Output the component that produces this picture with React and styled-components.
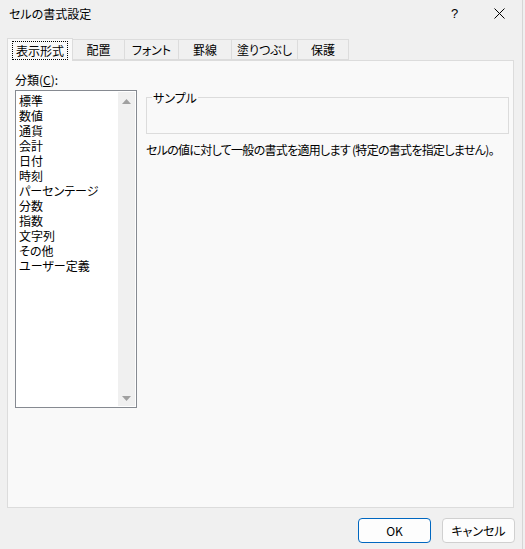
import React from 'react';
import styled, {createGlobalStyle} from 'styled-components';

const GlobalStyle = createGlobalStyle`
  html, body {
    margin: 0;
    padding: 0;
    background: #f0f0f0;
  }
  body {
    font-family: "Noto Sans CJK JP", "Noto Sans", sans-serif;
    font-size: 12px;
    font-feature-settings: "palt";
    color: #000;
  }
`;

const Window = styled.div`
  width: 523px;
  height: 549px;
  background: #f0f0f0;
  border-right: 1px solid #d6d6d6;
  display: flex;
  flex-direction: column;
  box-sizing: border-box;
`;

const TitleBar = styled.div`
  height: 27px;
  display: flex;
  align-items: center;
  padding-left: 9px;

  > span {
    flex: 1;
    line-height: 15px;
  }
`;

const TitleButton = styled.div`
  width: 45px;
  height: 27px;
  display: flex;
  align-items: center;
  justify-content: center;
  font-family: "Liberation Sans", sans-serif;
  font-size: 13px;
`;

const TabStrip = styled.div`
  display: flex;
  align-items: flex-end;
  margin-top: 10px;
  padding-left: 7px;
  height: 23px;
`;

const Tab = styled.div`
  width: ${(p) => p.w}px;
  height: ${(p) => (p.active ? 23 : 21)}px;
  box-sizing: border-box;
  border: 1px solid #dcdcdc;
  border-bottom: ${(p) => (p.active ? 'none' : '1px solid #dcdcdc')};
  border-left: ${(p) => (p.first || p.active ? '1px solid #dcdcdc' : 'none')};
  background: ${(p) => (p.active ? '#f9f9f9' : '#f0f0f0')};
  display: flex;
  align-items: center;
  justify-content: center;
  line-height: 15px;
  white-space: nowrap;
  position: relative;
  z-index: ${(p) => (p.active ? 1 : 0)};
  margin-bottom: ${(p) => (p.active ? '-1px' : '0')};

  > span {
    padding: 1px 3px;
    border: ${(p) => (p.active ? '1px dotted #000' : '1px solid transparent')};
  }
`;

const Panel = styled.div`
  margin: 0 8px 0 7px;
  height: 448px;
  box-sizing: border-box;
  border: 1px solid #dcdcdc;
  background: #f9f9f9;
  padding: 11px 7px 0 7px;
  display: flex;
  gap: 9px;
`;

const LeftColumn = styled.div`
  display: flex;
  flex-direction: column;
  gap: 3px;
`;

const Label = styled.div`
  line-height: 15px;
`;

const ListBox = styled.div`
  width: 122px;
  height: 318px;
  box-sizing: border-box;
  border: 1px solid #868a91;
  background: #fff;
  padding: 1px;
  display: flex;
`;

const ListItems = styled.div`
  flex: 1;
  padding-left: 2px;
  padding-top: 1px;

  > div {
    line-height: 15px;
    height: 15px;
    white-space: nowrap;
  }
`;

const ScrollBar = styled.div`
  width: 17px;
  background: #f0f0f0;
  display: flex;
  flex-direction: column;
  justify-content: space-between;
  align-items: center;
  padding: 7px 0 5px;
  box-sizing: border-box;
`;

const RightColumn = styled.div`
  display: flex;
  flex-direction: column;
  padding-top: 25px;
`;

const SampleBox = styled.div`
  position: relative;
  width: 363px;
  height: 37px;
  box-sizing: border-box;
  border: 1px solid #dcdcdc;
`;

const Legend = styled.span`
  position: absolute;
  top: -8px;
  left: 5px;
  padding: 0 1px;
  background: #f9f9f9;
  line-height: 15px;
`;

const Description = styled.div`
  margin-top: 8px;
  line-height: 15px;
  white-space: nowrap;
  letter-spacing: -0.7px;
`;

const Footer = styled.div`
  display: flex;
  justify-content: flex-end;
  gap: 11px;
  padding: 10px 7px 0 0;
`;

const Button = styled.button`
  width: 73px;
  height: 25px;
  box-sizing: border-box;
  border-radius: 4px;
  border: 1px solid ${(p) => (p.primary ? '#0067c0' : '#d0d0d0')};
  background: #fdfdfd;
  font-family: "Noto Sans CJK JP", "Noto Sans", sans-serif;
  font-size: 12px;
  font-feature-settings: "palt";
  line-height: 15px;
  color: #000;
  padding: 0;
`;

const tabs = [
  {label: '表示形式', w: 66},
  {label: '配置', w: 52},
  {label: 'フォント', w: 54},
  {label: '罫線', w: 53},
  {label: '塗りつぶし', w: 66},
  {label: '保護', w: 51},
];

const categories = [
  '標準', '数値', '通貨', '会計', '日付', '時刻',
  'パーセンテージ', '分数', '指数', '文字列', 'その他', 'ユーザー定義',
];

function Arrow({down}) {
  return (
    <svg width="9" height="5" viewBox="0 0 9 5">
      <polygon points={down ? '0,0 9,0 4.5,5' : '0,5 9,5 4.5,0'} fill="#a0a0a0"/>
    </svg>
  );
}

export default function App() {
  return (
    <Window>
      <GlobalStyle/>
      <TitleBar>
        <span>セルの書式設定</span>
        <TitleButton>?</TitleButton>
        <TitleButton>
          <svg width="11" height="11" viewBox="0 0 11 11">
            <path d="M0.5 0.5 L10.5 10.5 M10.5 0.5 L0.5 10.5" stroke="#000" strokeWidth="1"/>
          </svg>
        </TitleButton>
      </TitleBar>
      <TabStrip>
        {tabs.map((t, i) => (
          <Tab key={t.label} w={t.w} active={i === 0} first={i === 0}>
            <span>{t.label}</span>
          </Tab>
        ))}
      </TabStrip>
      <Panel>
        <LeftColumn>
          <Label>分類(<u>C</u>):</Label>
          <ListBox>
            <ListItems>
              {categories.map((c) => <div key={c}>{c}</div>)}
            </ListItems>
            <ScrollBar>
              <Arrow/>
              <Arrow down/>
            </ScrollBar>
          </ListBox>
        </LeftColumn>
        <RightColumn>
          <SampleBox>
            <Legend>サンプル</Legend>
          </SampleBox>
          <Description>セルの値に対して一般の書式を適用します (特定の書式を指定しません)。</Description>
        </RightColumn>
      </Panel>
      <Footer>
        <Button primary>OK</Button>
        <Button>キャンセル</Button>
      </Footer>
    </Window>
  );
}
